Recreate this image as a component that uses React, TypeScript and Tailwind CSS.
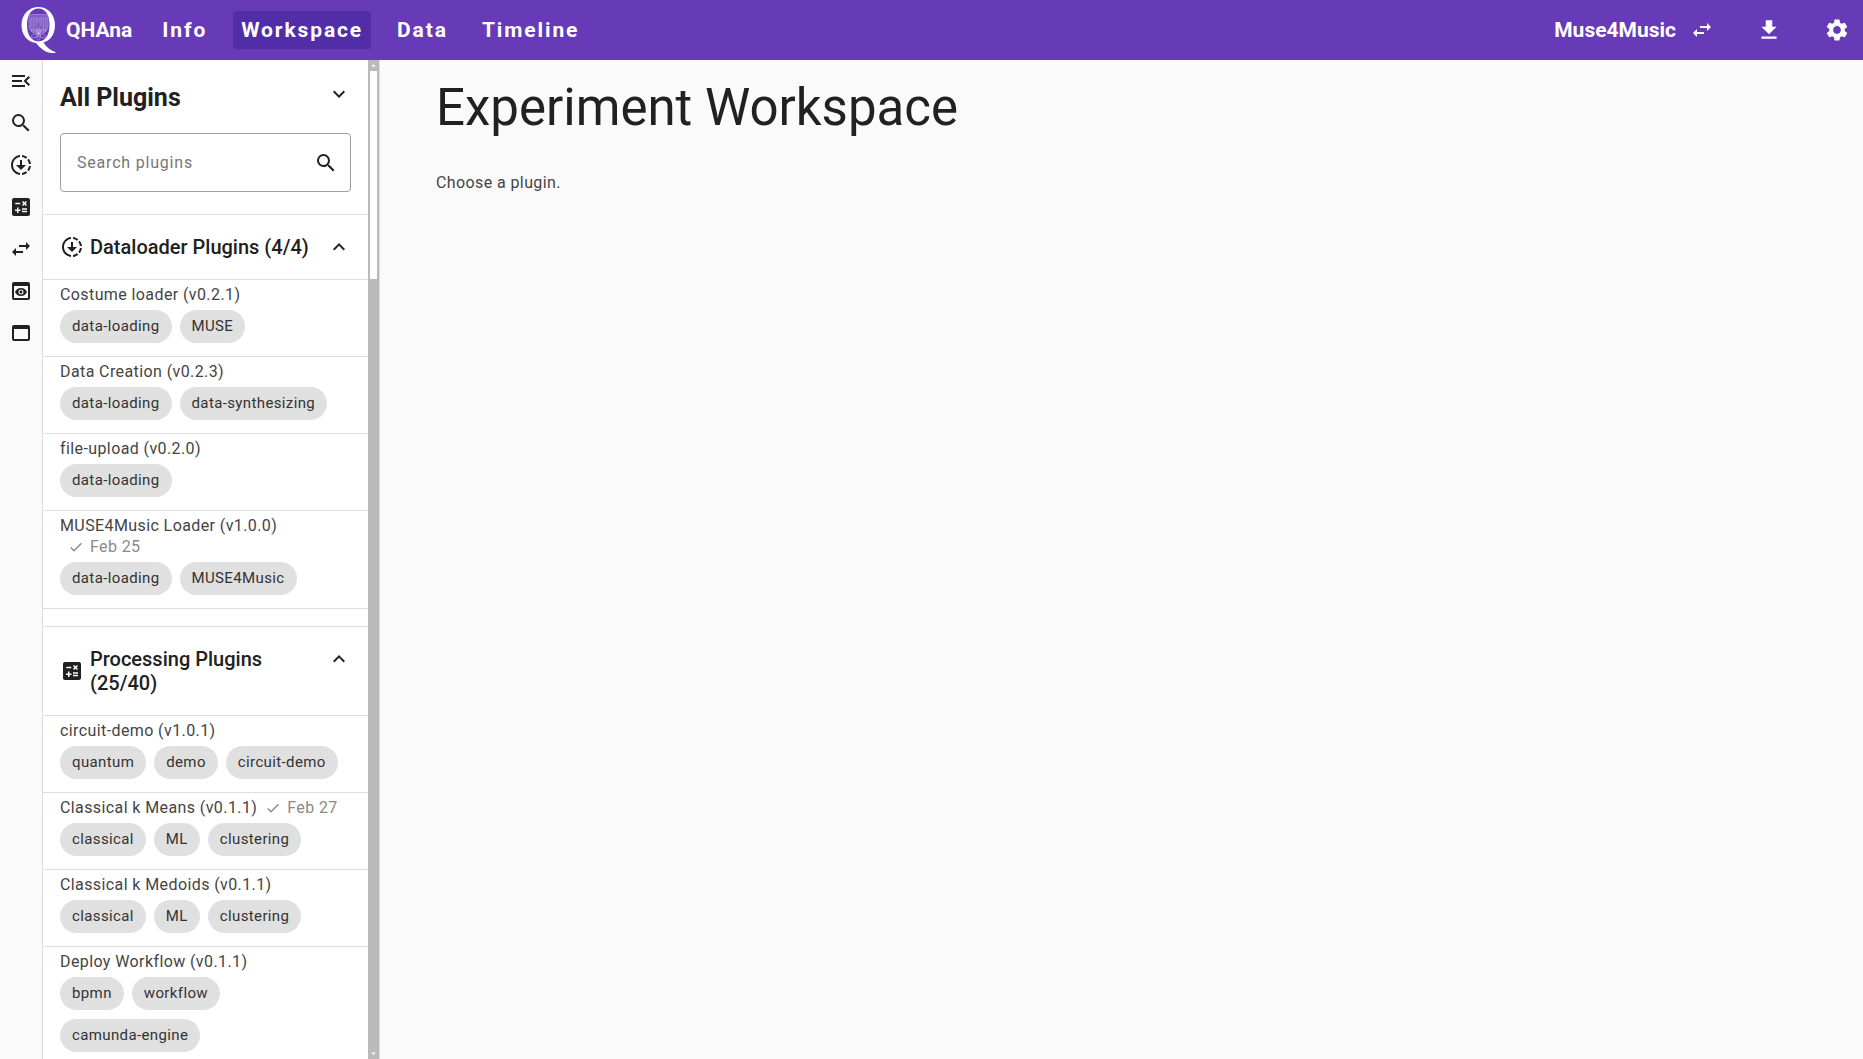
import { useState } from "react";
import {
  MdMenuOpen,
  MdSearch,
  MdDownloading,
  MdCalculate,
  MdSwapHoriz,
  MdPreview,
  MdWebAsset,
  MdFileDownload,
  MdSettings,
  MdExpandMore,
  MdExpandLess,
  MdCheck,
  MdArrowDropUp,
  MdArrowDropDown,
} from "react-icons/md";
import type { IconType } from "react-icons";

type Plugin = { name: string; tags: string[]; done?: string };
type Group = { title: string; icon: IconType; plugins: Plugin[] };

const groups: Group[] = [
  {
    title: "Dataloader Plugins (4/4)",
    icon: MdDownloading,
    plugins: [
      { name: "Costume loader (v0.2.1)", tags: ["data-loading", "MUSE"] },
      { name: "Data Creation (v0.2.3)", tags: ["data-loading", "data-synthesizing"] },
      { name: "file-upload (v0.2.0)", tags: ["data-loading"] },
      { name: "MUSE4Music Loader (v1.0.0)", tags: ["data-loading", "MUSE4Music"], done: "Feb 25" },
    ],
  },
  {
    title: "Processing Plugins (25/40)",
    icon: MdCalculate,
    plugins: [
      { name: "circuit-demo (v1.0.1)", tags: ["quantum", "demo", "circuit-demo"] },
      { name: "Classical k Means (v0.1.1)", tags: ["classical", "ML", "clustering"], done: "Feb 27" },
      { name: "Classical k Medoids (v0.1.1)", tags: ["classical", "ML", "clustering"] },
      { name: "Deploy Workflow (v0.1.1)", tags: ["bpmn", "workflow", "camunda-engine"] },
    ],
  },
];

const railItems: { label: string; icon: IconType }[] = [
  { label: "Collapse sidebar", icon: MdMenuOpen },
  { label: "Search", icon: MdSearch },
  { label: "Dataloader plugins", icon: MdDownloading },
  { label: "Processing plugins", icon: MdCalculate },
  { label: "Conversion plugins", icon: MdSwapHoriz },
  { label: "Visualization plugins", icon: MdPreview },
  { label: "Other plugins", icon: MdWebAsset },
];

const navItems = ["Info", "Workspace", "Data", "Timeline"];

function Logo() {
  return (
    <svg viewBox="0 0 38 48" className="h-12 w-[38px]" aria-hidden="true">
      <path
        fill="#fff"
        fillRule="evenodd"
        d="M18.500 1C28 1 35 8.500 35 19C35 28 30.500 34.500 23.500 36.500C26.500 41.500 31 44.800 36 46.200C35 47 33.500 47 32 47C26 47 20 42 16 37C7.500 36 1.500 29 1.500 19C1.500 8.500 9 1 18.500 1ZM18.500 2.600C11.500 2.600 7 9 7 19C7 29 11.500 35.400 18.500 35.400C25.500 35.400 29.500 29 29.500 19C29.500 9 25.500 2.600 18.500 2.600Z"
      />
      <g fill="none" stroke="#b9a3e0" strokeWidth="0.6">
        <path fill="#9575cd" fillOpacity="0.6" d="M9 10L11 8.500H26L28 10V22L25 26H12L9 22Z" />
        <path d="M11 22V12H26V22M13.500 22V14H23.500V22M16 20V16H21V20M10 24H27" />
        <ellipse cx="18.500" cy="27.500" rx="8" ry="2.500" transform="rotate(28 18.500 27.500)" />
        <ellipse cx="18.500" cy="27.500" rx="8" ry="2.500" transform="rotate(-28 18.500 27.500)" />
        <ellipse cx="18.500" cy="28" rx="2" ry="6.500" />
        <circle cx="18.500" cy="27.500" r="1.200" fill="#e4dbf4" />
      </g>
    </svg>
  );
}

function PluginItem({ plugin }: { plugin: Plugin }) {
  return (
    <li className="border-t border-[#dedede] px-[17px] pt-1 pb-[13px]">
      <a href="#plugin" className="block text-base leading-[21px] tracking-wide text-[#444]">
        {plugin.name}
        {plugin.done && (
          <span className="inline-flex items-center gap-1.5 pl-2 align-top text-[#8a8a8a]">
            <MdCheck className="size-4" />
            {plugin.done}
          </span>
        )}
      </a>
      <div className="mt-[5px] flex flex-wrap gap-x-2 gap-y-[9px]">
        {plugin.tags.map((t) => (
          <span key={t} className="rounded-full bg-[#e0e0e0] px-3 py-1.5 text-[15px] leading-[21px] tracking-wide text-[#333]">
            {t}
          </span>
        ))}
      </div>
    </li>
  );
}

function PluginGroup({ group }: { group: Group }) {
  const [open, setOpen] = useState(true);
  const Icon = group.icon;
  return (
    <section className="mb-[17px] border-b border-[#dedede]">
      <h3 className="border-t border-[#dedede]">
        <button
          type="button"
          aria-expanded={open}
          onClick={() => setOpen(!open)}
          className="flex w-full items-center gap-1.5 px-[17px] py-5 text-left text-xl leading-6 font-medium"
        >
          <Icon className="size-6 shrink-0" />
          <span className="flex-1">{group.title}</span>
          {open ? (
            <MdExpandLess className="size-6 shrink-0 self-start" />
          ) : (
            <MdExpandMore className="size-6 shrink-0 self-start" />
          )}
        </button>
      </h3>
      {open && (
        <ul>
          {group.plugins.map((p) => (
            <PluginItem key={p.name} plugin={p} />
          ))}
        </ul>
      )}
    </section>
  );
}

export default function App() {
  const [active, setActive] = useState("Workspace");
  return (
    <div className="flex h-screen flex-col bg-[#fafafa] font-[Roboto,sans-serif] text-[#212121]">
      <header className="flex h-15 shrink-0 items-center bg-[#673ab7] text-[21px] leading-7 font-bold text-white">
        <a href="#home" className="flex items-center gap-2 pl-5">
          <Logo />
          QHAna
        </a>
        <nav className="ml-[22px] flex gap-[18px]">
          {navItems.map((n) => (
            <button
              key={n}
              type="button"
              onClick={() => setActive(n)}
              className={`rounded px-2 py-[5px] tracking-[0.09em] ${active === n ? "bg-[#512da8]" : ""}`}
            >
              {n}
            </button>
          ))}
        </nav>
        <div className="ml-auto flex items-center pr-[13px]">
          <button type="button" className="flex items-center gap-3.5">
            Muse4Music
            <MdSwapHoriz className="size-6" />
          </button>
          <button type="button" aria-label="Download" className="ml-[42px]">
            <MdFileDownload className="size-[26px]" />
          </button>
          <button type="button" aria-label="Settings" className="ml-[42px]">
            <MdSettings className="size-[26px]" />
          </button>
        </div>
      </header>
      <div className="flex min-h-0 flex-1">
        <div className="flex w-[43px] shrink-0 flex-col border-r border-[#dedede]">
          {railItems.map(({ label, icon: Icon }) => (
            <button key={label} type="button" aria-label={label} className="flex h-[42px] items-center justify-center">
              <Icon className="size-6" />
            </button>
          ))}
        </div>
        <aside className="flex w-[337px] shrink-0 border-r border-[#dedede] bg-white">
          <div className="min-w-0 flex-1 overflow-y-auto [scrollbar-width:none]">
            <div className="flex items-start justify-between px-[17px] pt-[22px]">
              <h2 className="text-[25px] leading-8 font-bold">All Plugins</h2>
              <button type="button" aria-label="Filter plugins">
                <MdExpandMore className="size-6" />
              </button>
            </div>
            <label className="mx-[17px] mt-[19px] mb-[22px] flex h-[59px] items-center rounded border border-[#9e9e9e] pr-3 pl-4">
              <input
                type="search"
                aria-label="Search plugins"
                placeholder="Search plugins"
                className="min-w-0 flex-1 text-base tracking-wider outline-none placeholder:text-[#777]"
              />
              <MdSearch className="size-6" />
            </label>
            {groups.map((g) => (
              <PluginGroup key={g.title} group={g} />
            ))}
          </div>
          <div className="flex w-[11px] shrink-0 flex-col items-center bg-[#bababa] text-white" aria-hidden="true">
            <MdArrowDropUp className="size-[11px]" />
            <div className="h-52 w-[7px] bg-white" />
            <MdArrowDropDown className="mt-auto size-[11px]" />
          </div>
        </aside>
        <main className="min-w-0 flex-1 px-14 pt-4">
          <h1 className="text-[51px] leading-16">Experiment Workspace</h1>
          <p className="mt-[31px] text-base tracking-wide text-[#444]">Choose a plugin.</p>
        </main>
      </div>
    </div>
  );
}
